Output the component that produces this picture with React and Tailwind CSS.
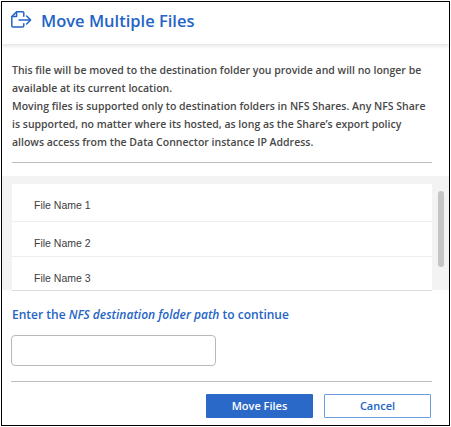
import React from "react";

const paragraph = [
  "This file will be moved to the destination folder you provide and will no longer be",
  "available at its current location.",
  "Moving files is supported only to destination folders in NFS Shares. Any NFS Share",
  "is supported, no matter where its hosted, as long as the Share’s export policy",
  "allows access from the Data Connector instance IP Address.",
];

function MoveFileIcon() {
  return (
    <svg className="h-[18px] w-[21px]" viewBox="0 0 21 18" fill="none" stroke="#2464c6" strokeWidth="1.5" strokeLinecap="round" strokeLinejoin="round">
      <path d="M12.8 5.2V2q0-1.2-1.2-1.2H5.6L.8 5.6v9.2q0 1.2 1.2 1.2h9.6q1.2 0 1.2-1.2v-2" />
      <path d="M5.6 1v4.6H1" />
      <path d="M8 9h11.6M15.6 5l4 4-4 4" />
    </svg>
  );
}

export default function App() {
  return (
    <div className="h-[427px] w-[451px] bg-white p-px font-['Open_Sans',sans-serif]">
      <div className="flex h-[425px] w-[449px] flex-col border border-black bg-white">
        <header className="flex h-[42px] shrink-0 items-center pb-1 pl-[9px] shadow-[0_2px_4px_rgba(0,0,0,0.12)]">
          <div className="pb-[2px]">
            <MoveFileIcon />
          </div>
          <h1 className="ml-[9px] text-[16.5px] leading-6 font-semibold whitespace-nowrap text-[#2464c6]">Move Multiple Files</h1>
        </header>

        <div className="mt-[17px] ml-[10px] text-[10.5px] leading-[18px] font-semibold whitespace-nowrap text-[#484848]">
          {paragraph.map((line) => (
            <p key={line}>{line}</p>
          ))}
        </div>
        <hr className="mt-[11px] ml-[10px] w-[420px] border-[#bdbdbd]" />

        <div className="mt-[13px] flex h-[114px] shrink-0 bg-[#f3f3f3] pt-2 pl-[10px]">
          <ul className="h-[107px] w-[420px] border-b border-[#dcdcdc] bg-white font-['Liberation_Sans',Arial,sans-serif] text-[10.5px] text-[#404040]">
            <li className="flex h-[38px] items-center border-b border-[#eeeeee] pt-[7px] pl-[22px]">File Name 1</li>
            <li className="flex h-[35px] items-center border-b border-[#eeeeee] pt-[10px] pl-[22px]">File Name 2</li>
            <li className="flex h-[33px] items-center pt-[11px] pl-[22px]">File Name 3</li>
          </ul>
          <div className="mt-[7px] ml-[6px] h-[76px] w-[6px] rounded-full bg-[#c4c4c4]" />
        </div>

        <label htmlFor="path" className="mt-[16px] ml-[10px] text-[12px] leading-[18px] font-semibold whitespace-nowrap text-[#2464c6]">
          Enter the <em>NFS destination folder path</em> to continue
        </label>
        <input id="path" className="mt-[11px] ml-[9px] h-[31px] w-[205px] shrink-0 rounded-[4px] border border-[#b8b8b8] bg-white px-2 text-[11px] outline-none" />
        <hr className="mt-[15px] ml-[9px] w-[421px] border-[#bdbdbd]" />

        <div className="mt-[12px] ml-[204px] flex gap-[11px] text-[11px] font-semibold">
          <button className="h-6 w-[107px] rounded-[1px] bg-[#2a69c8] pt-px text-white">Move Files</button>
          <button className="h-6 w-[107px] rounded-[1px] border border-[#6d9be0] bg-white pt-px text-[#2464c6]">Cancel</button>
        </div>
      </div>
    </div>
  );
}
